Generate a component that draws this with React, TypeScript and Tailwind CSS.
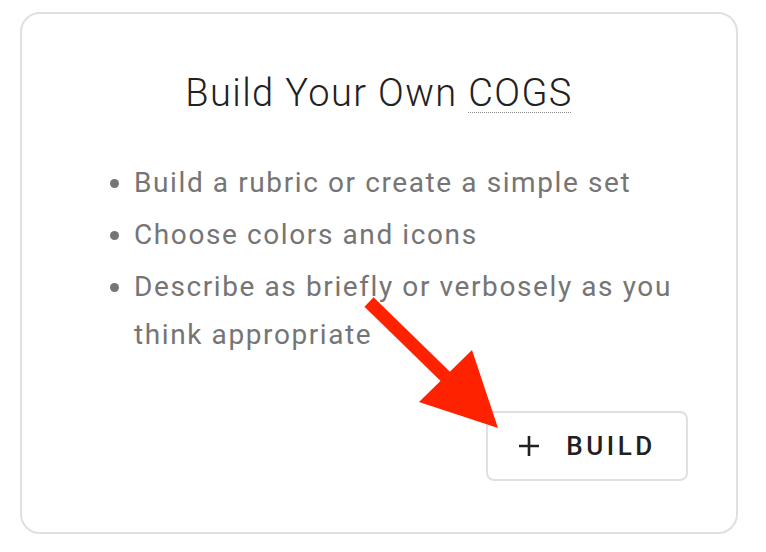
import React from 'react';

const items = [
  'Build a rubric or create a simple set',
  'Choose colors and icons',
  'Describe as briefly or verbosely as you think appropriate',
];

function PlusIcon() {
  return (
    <svg width="22" height="22" viewBox="0 0 22 22" className="shrink-0">
      <path d="M11 1v20M1 11h20" stroke="#212121" strokeWidth="2.6" fill="none" />
    </svg>
  );
}

export default function App() {
  return (
    <div className="min-h-screen bg-white font-['Roboto',sans-serif]">
      <div className="relative ml-[20px] mt-[12px] w-[718px] h-[522px] border-2 border-[#e0e0e0] rounded-[20px] flex flex-col">
        <h1 className="pt-[57px] text-center text-[38px] leading-[44px] font-light tracking-[1.4px] text-[#212121]">
          Build Your Own{' '}
          <abbr
            title="Collection of Gradable Sets"
            className="underline decoration-dotted decoration-[#8a8a8a] decoration-1 underline-offset-[6px]"
          >
            COGS
          </abbr>
        </h1>

        <ul className="mt-[44px] pl-[112px] pr-[50px] list-disc text-[28px] leading-[48px] tracking-[1.6px] text-[#757575]">
          {items.map((item) => (
            <li key={item} className="mb-[4px] marker:text-[#757575]">
              {item}
            </li>
          ))}
        </ul>

        <div className="mt-auto mb-[51px] mr-[48px] flex justify-end">
          <button className="w-[202px] h-[70px] border-2 border-[#e0e0e0] rounded-[8px] bg-white flex items-center justify-center gap-[26px] text-[26px] font-medium tracking-[3.5px] text-[#212121]">
            <PlusIcon />
            <span>BUILD</span>
          </button>
        </div>

        {/* red annotation arrow */}
        <svg
          className="absolute pointer-events-none"
          style={{ left: -22, top: -14 }}
          width="766"
          height="552"
          viewBox="0 0 766 552"
        >
          <line x1="369" y1="302" x2="448" y2="379" stroke="#ff2200" strokeWidth="13" />
          <polygon points="419,402 472,350 498,428" fill="#ff2200" />
        </svg>
      </div>
    </div>
  );
}
